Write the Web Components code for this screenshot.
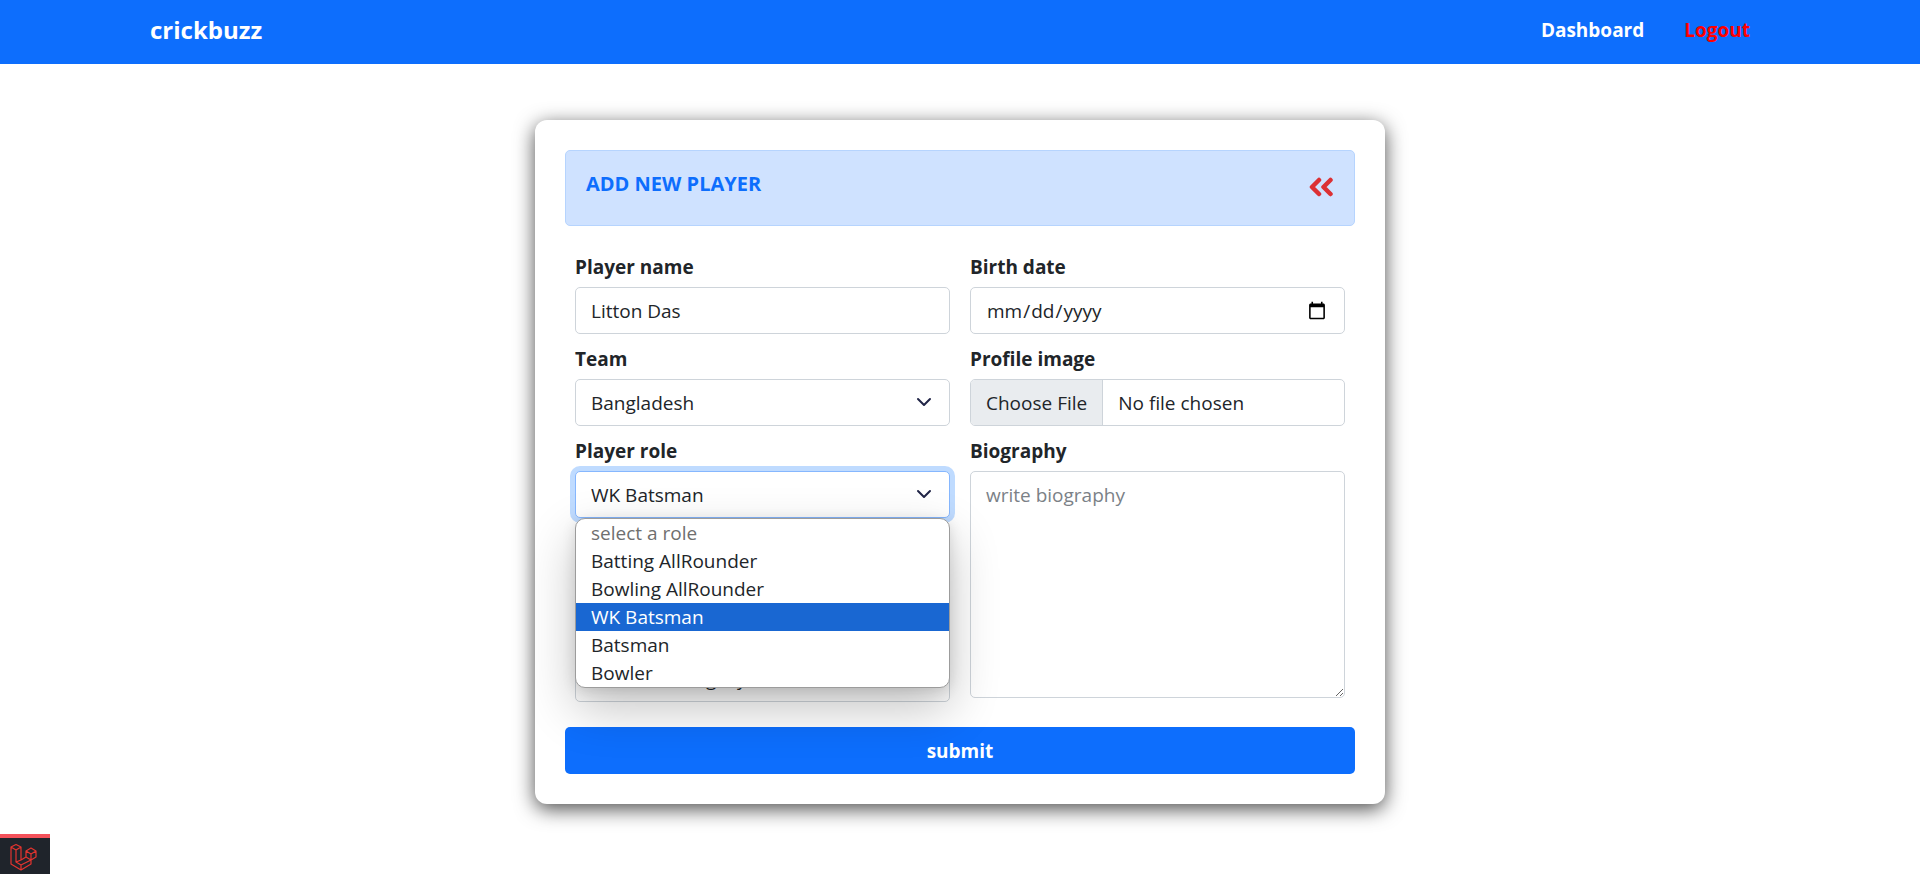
<!DOCTYPE html>
<html lang="en">
<head>
<meta charset="utf-8">
<title>crickbuzz</title>
<style>
  body {
    margin: 0;
    background: #fff;
    color: #212529;
    font-family: "Open Sans", "Noto Sans", sans-serif;
    font-size: 19px;
    line-height: 30px;
  }
</style>
</head>
<body>
<player-page></player-page>

<script>
const define = (name, html, setup) => {
  const template = document.createElement('template');
  template.innerHTML = '<style>*,*::before,*::after{box-sizing:border-box}</style>' + html;
  customElements.define(name, class extends HTMLElement {
    constructor() {
      super();
      this.attachShadow({ mode: 'open' }).append(template.content.cloneNode(true));
    }
    connectedCallback() { if (setup) setup(this, this.shadowRoot); }
  });
};

const controlStyle = `
  :host { display: block; }
  label { display: block; margin-bottom: 5px; font-weight: 700; font-size: 19px; }
  input, select, textarea {
    display: block; width: 100%; height: 47px; margin: 0; padding: 8px 15px;
    font: inherit; color: inherit; background-color: #fff;
    border: 1px solid #ced4da; border-radius: 5px; outline: 0;
  }
`;

define('site-nav', `
  <style>
    :host { display: block; background: #0d6efd; }
    header { display: flex; justify-content: space-between; align-items: center; height: 64px;
      max-width: 1650px; margin: 0 auto; padding: 0 15px 4px; }
    a { color: #fff; text-decoration: none; font-weight: 700; }
    .brand { font-size: 24px; }
    nav { display: flex; }
    nav a { padding: 0 20px; font-size: 19px; }
    .logout { color: #f00; }
  </style>
  <header>
    <a class="brand" href="#">crickbuzz</a>
    <nav><a href="#">Dashboard</a><a class="logout" href="#">Logout</a></nav>
  </header>`);

define('form-card', `
  <style>
    :host { display: block; max-width: 850px; margin: 56px auto 0; padding: 30px; border-radius: 12px;
      background: #fff; box-shadow: 0 5px 20px rgba(0,0,0,.7); }
  </style>
  <slot></slot>`);

define('card-heading', `
  <style>
    :host { display: flex; justify-content: space-between; align-items: flex-start; height: 76px;
      padding: 18px 20px; border: 1px solid #b6d4fe; border-radius: 5px; background: #cfe2ff; box-sizing: border-box; }
    h1 { margin: 0; font-size: 20px; line-height: 30px; font-weight: 700; color: #0d6efd; }
    a { display: block; padding-top: 8px; }
    svg { display: block; }
  </style>
  <h1><slot></slot></h1>
  <a href="#" aria-label="Back">
    <svg width="26" height="20" viewBox="0 0 26 20" fill="none" stroke="#dc3034" stroke-width="4.500" stroke-linecap="round" stroke-linejoin="round">
      <path d="M11 3 4 10l7 7M22.500 3 15.500 10l7 7"/>
    </svg>
  </a>`);

define('input-field', `
  <style>${controlStyle}
    input::file-selector-button {
      margin: -8px 15px -8px -15px; padding: 8px 15px; font: inherit; color: inherit; height: 46px;
      background: #e9ecef; border: 0 solid #ced4da; border-right-width: 1px;
    }
    input[type=file] { overflow: hidden; }
    input[type=date]::-webkit-calendar-picker-indicator { width: 20px; height: 20px; padding: 2px; }
  </style>
  <label for="control"></label><input id="control">`,
  (host, root) => {
    root.querySelector('label').textContent = host.getAttribute('label');
    const input = root.querySelector('input');
    input.type = host.getAttribute('type') || 'text';
    if (host.hasAttribute('value')) input.value = host.getAttribute('value');
  });

define('text-field', `
  <style>${controlStyle}
    textarea { height: 227px; resize: vertical; }
    textarea::placeholder { color: #7b8187; opacity: 1; }
  </style>
  <label for="control"></label><textarea id="control"></textarea>`,
  (host, root) => {
    root.querySelector('label').textContent = host.getAttribute('label');
    root.querySelector('textarea').placeholder = host.getAttribute('placeholder');
  });

define('select-field', `
  <style>${controlStyle}
    .box { position: relative; }
    select { appearance: none; padding-right: 45px; }
    svg { position: absolute; right: 16px; top: 15px; pointer-events: none; }
    :host([open]) select { border-color: #86b7fe; box-shadow: 0 0 0 5px #bfdbff; }
    ul { display: none; position: absolute; z-index: 2; top: 100%; left: 0; right: 0; margin: 0; padding: 0;
      list-style: none; overflow: hidden; background: #fff; border: 1px solid #9c9c9c; border-radius: 10px; }
    :host([open]) ul { display: block; box-shadow: 0 20px 50px rgba(0,0,0,.24), 0 3px 14px rgba(0,0,0,.12); }
    li { height: 28px; line-height: 28px; padding: 0 15px; }
    li.muted { color: #6f6f6f; }
    li[aria-selected=true] { background: #1967d2; color: #fff; }
    :host([covered]) label, :host([covered=all]) .box { visibility: hidden; }
  </style>
  <label for="control"></label>
  <div class="box">
    <select id="control"></select>
    <svg width="20" height="16" viewBox="0 0 20 16" fill="none" stroke="#212547" stroke-width="2" stroke-linecap="round" stroke-linejoin="round"><path d="M4 5l6 6 6-6"/></svg>
    <ul role="listbox"></ul>
  </div>`,
  (host, root) => {
    root.querySelector('label').textContent = host.getAttribute('label');
    const select = root.querySelector('select');
    const chosen = host.getAttribute('value');
    const options = host.getAttribute('options').split('|');
    options.forEach(text => select.add(new Option(text, text, text === chosen, text === chosen)));
    if (!host.hasAttribute('open')) return;
    const list = root.querySelector('ul');
    options.forEach((text, i) => {
      const item = document.createElement('li');
      item.setAttribute('role', 'option');
      item.setAttribute('aria-selected', text === chosen);
      if (i === 0) item.className = 'muted';
      item.textContent = text;
      list.append(item);
    });
  });

define('submit-button', `
  <style>
    :host { display: block; }
    button { display: block; width: 100%; height: 47px; border: 0; border-radius: 5px; background: #0d6efd;
      color: #fff; font: inherit; font-weight: 700; }
  </style>
  <button type="submit"><slot></slot></button>`);

define('debug-toggle', `
  <style>
    :host { position: fixed; left: 0; bottom: 0; }
    button { display: flex; align-items: center; justify-content: center; width: 50px; height: 40px;
      padding: 2px 4px 0 0; border: 0; border-top: 4px solid #f4515a; background: #1f242b; }
  </style>
  <button type="button" aria-label="Open debug bar">
    <svg width="28" height="28" viewBox="0 0 28 28" fill="none" stroke="#e3342f" stroke-width="1.200" stroke-linejoin="round">
      <path d="M2 4 7 1.500 12 4v13l5-3V8l5-3 5 3v6l-5 3v4l-10 6-10-6ZM2 4l5 3 5-3M7 7v12l5 3 10-5M12 17l-5 2M17 8l5 3 5-3M22 11v6M17 14l5 3M12 22v5"/>
    </svg>
  </button>`);

define('player-page', `
  <style>
    :host { display: block; min-height: 100vh; }
    .fields { display: grid; grid-template-columns: 1fr 1fr; gap: 20px; padding: 26px 10px 25px; }
    .column { display: flex; flex-direction: column; gap: 10px; }
  </style>
  <site-nav></site-nav>
  <form-card>
    <card-heading>ADD NEW PLAYER</card-heading>
    <div class="fields">
      <div class="column">
        <input-field label="Player name" value="Litton Das"></input-field>
        <select-field label="Team" value="Bangladesh" options="Bangladesh"></select-field>
        <select-field open label="Player role" value="WK Batsman"
          options="select a role|Batting AllRounder|Bowling AllRounder|WK Batsman|Batsman|Bowler"></select-field>
        <select-field covered="all" label="Batting style" options="select batting style"></select-field>
        <select-field covered="label" label="Bowling style" options="select bowling style"></select-field>
      </div>
      <div class="column">
        <input-field label="Birth date" type="date"></input-field>
        <input-field label="Profile image" type="file"></input-field>
        <text-field label="Biography" placeholder="write biography"></text-field>
      </div>
    </div>
    <submit-button>submit</submit-button>
  </form-card>
  <debug-toggle></debug-toggle>`);
</script>
</body>
</html>
